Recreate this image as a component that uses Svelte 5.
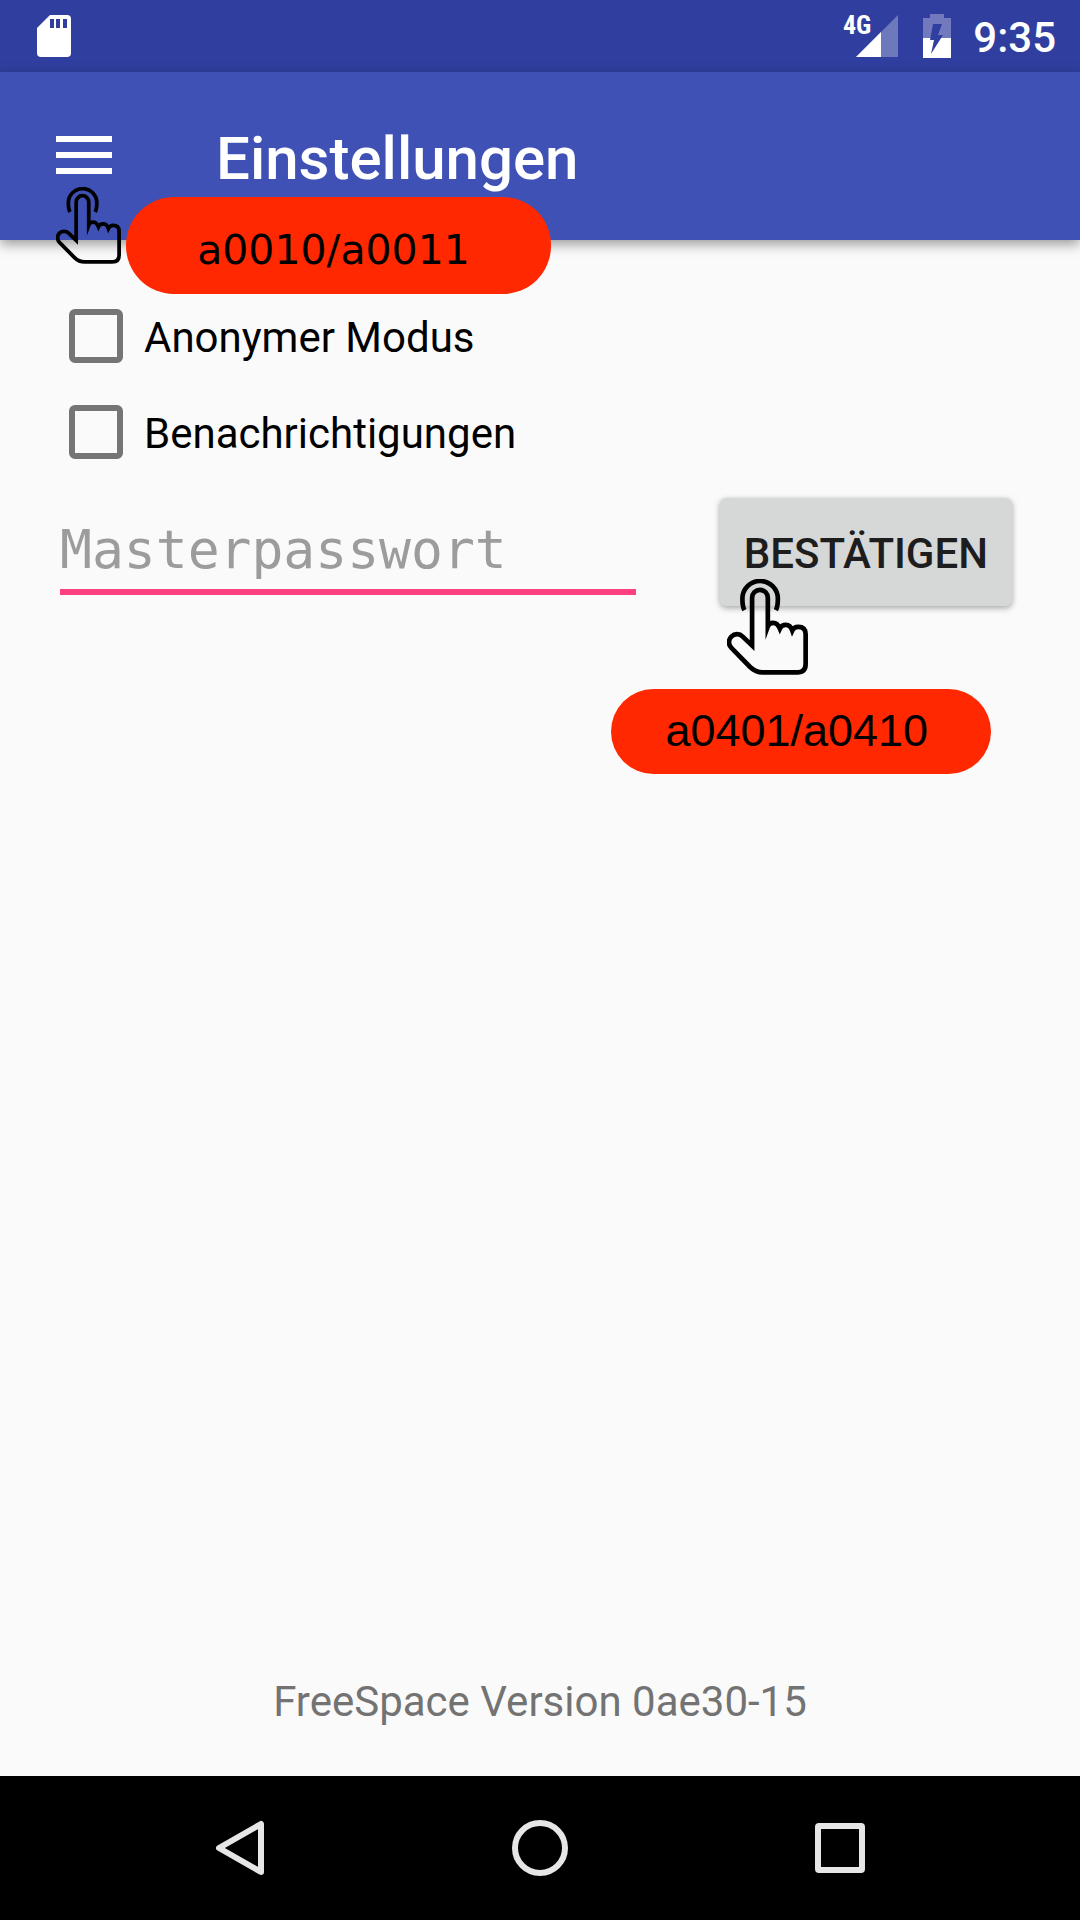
<script>
  let anonymous = $state(false);
  let notifications = $state(false);
  let password = $state('');
</script>

{#snippet hand()}
  <svg viewBox="0 0 242 286" fill="none" stroke="#000" stroke-width="14" stroke-miterlimit="8" aria-hidden="true">
    <path d="M52 93C47 84 46 73 46 59A53 53 0 1 1 152 59C152 73 151 84 146 93" />
    <path d="M75 199V56a23.500 23.500 0 0 1 47 0V142Q126 131 138 131Q151 131 158 148Q163 137 176 137Q189 137 195 154Q200 143 213 143Q235 143 235 165V254Q235 279 210 279H107Q85 279 69 263L13 206A24 24 0 0 1 47 172Z" />
  </svg>
{/snippet}

<div class="screen">
  <header class="status">
    <svg class="sd" viewBox="0 0 34 42" aria-label="SD-Karte">
      <path fill="#fff" d="M13 0H30Q34 0 34 4V38Q34 42 30 42H4Q0 42 0 38V13Z" />
      <path fill="#303f9f" d="M13 4h4v9h-4zM19 4h4v9h-4zM26 4h4v9h-4z" />
    </svg>
    <div class="signal">
      <span class="net">4G</span>
      <svg viewBox="0 0 42 42" aria-hidden="true">
        <path fill="#fff" fill-opacity=".3" d="M42 0V42H0Z" />
        <path fill="#fff" d="M25 17V42H0Z" />
      </svg>
    </div>
    <svg class="battery" viewBox="0 0 28 44" aria-label="Akku lädt">
      <path fill="#7279bd" d="M7 0H21V4H28V24H0V4H7Z" />
      <path fill="#fff" d="M0 24H28V44H0Z" />
      <path fill="#303f9f" d="M10 10H19L15 21H20L8 40L11 26H7Z" />
    </svg>
    <time class="time">9:35</time>
  </header>

  <div class="appbar">
    <button class="menu" aria-label="Menü"><span></span><span></span><span></span></button>
    <h1>Einstellungen</h1>
    <div class="hand hand-menu">{@render hand()}</div>
    <div class="tag tag-menu">a0010/a0011</div>
  </div>

  <main>
    <label class="option"><input type="checkbox" bind:checked={anonymous} /><span>Anonymer Modus</span></label>
    <label class="option"><input type="checkbox" bind:checked={notifications} /><span>Benachrichtigungen</span></label>
    <form class="row" onsubmit={(e) => e.preventDefault()}>
      <input class="password" type="password" placeholder="Masterpasswort" aria-label="Masterpasswort" bind:value={password} />
      <div class="action">
        <button class="confirm">BESTÄTIGEN</button>
        <div class="hand hand-confirm">{@render hand()}</div>
        <div class="tag tag-confirm">a0401/a0410</div>
      </div>
    </form>
    <p class="version">FreeSpace Version 0ae30-15</p>
  </main>

  <nav>
    <button aria-label="Zurück">
      <svg viewBox="0 0 56 56"><path d="M49 4V52L7 28Z" /></svg>
    </button>
    <button aria-label="Startbildschirm">
      <svg viewBox="0 0 56 56"><circle cx="28" cy="28" r="25" /></svg>
    </button>
    <button aria-label="Letzte Apps">
      <svg viewBox="0 0 56 56"><rect x="6" y="6" width="44" height="44" rx="1" /></svg>
    </button>
  </nav>
</div>

<style>
  :global(body) {
    margin: 0;
  }

  .screen {
    display: flex;
    flex-direction: column;
    min-height: 100vh;
    background: #fafafa;
    font-family: Roboto, sans-serif;
    font-size: 42px;
    line-height: 48px;
    color: #000;
  }

  button {
    border: 0;
    padding: 0;
    background: none;
    font: inherit;
  }

  svg {
    display: block;
  }

  .status {
    display: flex;
    align-items: center;
    height: 72px;
    padding: 0 24px 0 37px;
    box-sizing: border-box;
    background: #303f9f;
    color: #fff;
  }

  .sd {
    width: 34px;
    height: 42px;
    margin-right: auto;
  }

  .signal {
    position: relative;
    margin-right: 25px;
  }

  .signal svg {
    width: 42px;
    height: 42px;
  }

  .net {
    position: absolute;
    right: 27px;
    top: -2px;
    font-family: 'Roboto Condensed', Roboto, sans-serif;
    font-size: 26px;
    font-weight: 700;
    line-height: 24px;
  }

  .battery {
    width: 28px;
    height: 44px;
    margin-right: 22px;
  }

  .time {
    padding-top: 3px;
    font-weight: 500;
  }

  .appbar {
    position: relative;
    z-index: 1;
    display: flex;
    align-items: center;
    gap: 104px;
    height: 168px;
    padding: 0 56px;
    box-sizing: border-box;
    background: #3f51b5;
    box-shadow: 0 4px 12px rgba(0, 0, 0, 0.4);
  }

  .menu {
    display: grid;
    gap: 10px;
    width: 56px;
    padding-bottom: 2px;
  }

  .menu span {
    height: 6px;
    background: #fff;
  }

  h1 {
    margin: 0;
    padding-top: 6px;
    font-size: 60px;
    font-weight: 500;
    line-height: 72px;
    color: #fff;
  }

  .hand {
    position: absolute;
    pointer-events: none;
  }

  .hand-menu {
    left: 56px;
    top: 115px;
    width: 65px;
  }

  .hand-confirm {
    left: 7px;
    top: 81px;
    width: 81px;
  }

  .tag {
    position: absolute;
    display: flex;
    align-items: center;
    justify-content: center;
    border-radius: 48px;
    background: #ff2800;
    white-space: nowrap;
  }

  .tag-menu {
    left: 126px;
    top: 125px;
    width: 425px;
    height: 97px;
    padding: 8px 10px 0 0;
    box-sizing: border-box;
    font-family: Verdana, 'DejaVu Sans', sans-serif;
    font-size: 41px;
  }

  .tag-confirm {
    left: -109px;
    top: 191px;
    width: 380px;
    height: 85px;
    padding: 0 8px 2px 0;
    box-sizing: border-box;
    font-family: 'Liberation Sans', Arial, sans-serif;
    font-size: 45px;
  }

  main {
    display: flex;
    flex: 1;
    flex-direction: column;
    padding: 48px 68px 50px 60px;
  }

  .option {
    display: flex;
    align-items: center;
    gap: 21px;
    height: 96px;
    padding-left: 9px;
  }

  .option span {
    padding-top: 4px;
  }

  .option input {
    appearance: none;
    width: 54px;
    height: 54px;
    margin: 0;
    box-sizing: border-box;
    border: 6px solid #757575;
    border-radius: 6px;
  }

  .option input:checked {
    background: #ff4081;
    border-color: #ff4081;
  }

  .row {
    display: flex;
    align-items: flex-start;
    gap: 84px;
    padding-top: 18px;
  }

  .password {
    flex: 1;
    min-width: 0;
    height: 97px;
    padding: 12px 0 0;
    box-sizing: border-box;
    border: 0;
    border-bottom: 6px solid #ff4081;
    border-radius: 0;
    outline: 0;
    background: none;
    font-family: 'Droid Sans Mono', 'DejaVu Sans Mono', monospace;
    font-size: 53px;
  }

  .password::placeholder {
    color: #9c9c9c;
    opacity: 1;
  }

  .action {
    position: relative;
  }

  .confirm {
    height: 108px;
    padding: 4px 24px 0;
    border-radius: 6px;
    background: #d6d7d7;
    box-shadow: 0 2px 6px rgba(0, 0, 0, 0.35);
    font-weight: 500;
    color: #1d1d1d;
  }

  .version {
    margin: auto 0 0;
    padding-left: 8px;
    text-align: center;
    color: #737373;
  }

  nav {
    display: flex;
    justify-content: center;
    gap: 244px;
    padding: 44px 0;
    background: #000;
  }

  nav svg {
    width: 56px;
    height: 56px;
    fill: none;
    stroke: #e6e6e6;
    stroke-width: 6;
    stroke-linejoin: round;
  }
</style>
